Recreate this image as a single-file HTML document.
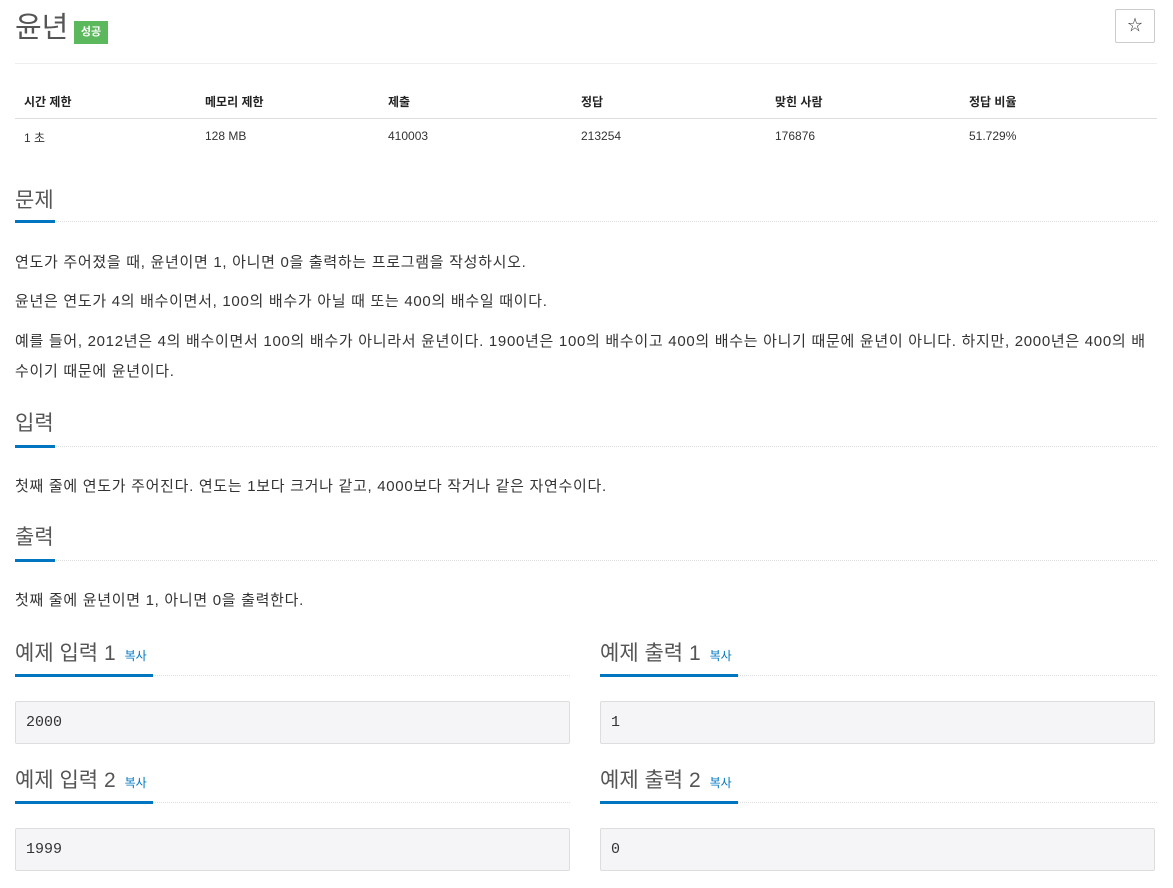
<!DOCTYPE html>
<html><head><meta charset="utf-8"><style>
*{box-sizing:border-box;margin:0;padding:0}
body{width:1173px;height:888px;background:#fff;font-family:"Liberation Sans","Noto Sans CJK KR",sans-serif;color:#333;position:relative;overflow:hidden}
.abs{position:absolute}
.title{left:15px;top:8px;font-size:29px;color:#555;line-height:40px}
.badge{left:74px;top:21px;width:34px;height:23px;background:#5cb85c;color:#fff;font-size:11px;font-weight:bold;text-align:center;line-height:23px}
.star{left:1115px;top:9px;width:40px;height:34px;border:1px solid #ccc;border-radius:2px;text-align:center;line-height:32px;font-size:15px;color:#333}
.hr{left:15px;width:1142px;height:1px;background:#eee}
.th{top:93px;font-size:12px;font-weight:bold;color:#222}
.td{top:129px;font-size:12px;color:#333}
.h{font-size:21px;color:#555;line-height:28px}
.ul{height:3px;background:#0076c0}
.dot{height:0;border-top:1px dotted #ddd}
.p{left:15px;font-size:15px;line-height:20px;color:#333;letter-spacing:0.7px;word-break:break-all}
.copy{font-size:12px;color:#0076c0;margin-left:9px}
.pre{height:43px;background:#f5f5f7;border:1px solid #ddd;border-radius:2px;font-family:"Liberation Mono",monospace;font-size:15px;line-height:41px;padding-left:10px;color:#333}
</style></head><body>
<div class="abs title">윤년</div>
<div class="abs badge">성공</div>
<div class="abs star">☆</div>
<div class="abs hr" style="top:63px"></div>
<div class="abs th" style="left:24px">시간 제한</div>
<div class="abs th" style="left:205px">메모리 제한</div>
<div class="abs th" style="left:388px">제출</div>
<div class="abs th" style="left:581px">정답</div>
<div class="abs th" style="left:775px">맞힌 사람</div>
<div class="abs th" style="left:969px">정답 비율</div>
<div class="abs hr" style="top:118px;background:#ddd"></div>
<div class="abs td" style="left:24px">1 초</div>
<div class="abs td" style="left:205px">128 MB</div>
<div class="abs td" style="left:388px">410003</div>
<div class="abs td" style="left:581px">213254</div>
<div class="abs td" style="left:775px">176876</div>
<div class="abs td" style="left:969px">51.729%</div>

<div class="abs h" style="left:15px;top:187px">문제</div>
<div class="abs dot" style="left:15px;top:221px;width:1142px"></div>
<div class="abs ul" style="left:15px;top:220px;width:40px"></div>
<div class="abs p" style="top:253px">연도가 주어졌을 때, 윤년이면 1, 아니면 0을 출력하는 프로그램을 작성하시오.</div>
<div class="abs p" style="top:292px">윤년은 연도가 4의 배수이면서, 100의 배수가 아닐 때 또는 400의 배수일 때이다.</div>
<div class="abs p" style="top:327px;width:1150px;line-height:30px">예를 들어, 2012년은 4의 배수이면서 100의 배수가 아니라서 윤년이다. 1900년은 100의 배수이고 400의 배수는 아니기 때문에 윤년이 아니다. 하지만, 2000년은 400의 배<br>수이기 때문에 윤년이다.</div>

<div class="abs h" style="left:15px;top:410px">입력</div>
<div class="abs dot" style="left:15px;top:446px;width:1142px"></div>
<div class="abs ul" style="left:15px;top:445px;width:40px"></div>
<div class="abs p" style="top:477px">첫째 줄에 연도가 주어진다. 연도는 1보다 크거나 같고, 4000보다 작거나 같은 자연수이다.</div>

<div class="abs h" style="left:15px;top:524px">출력</div>
<div class="abs dot" style="left:15px;top:560px;width:1142px"></div>
<div class="abs ul" style="left:15px;top:559px;width:40px"></div>
<div class="abs p" style="top:591px">첫째 줄에 윤년이면 1, 아니면 0을 출력한다.</div>

<div class="abs h" style="left:15px;top:640px">예제 입력 1<span class="copy">복사</span></div>
<div class="abs dot" style="left:15px;top:675px;width:555px"></div>
<div class="abs ul" style="left:15px;top:674px;width:138px"></div>
<div class="abs pre" style="left:15px;top:701px;width:555px">2000</div>
<div class="abs h" style="left:600px;top:640px">예제 출력 1<span class="copy">복사</span></div>
<div class="abs dot" style="left:600px;top:675px;width:557px"></div>
<div class="abs ul" style="left:600px;top:674px;width:138px"></div>
<div class="abs pre" style="left:600px;top:701px;width:555px">1</div>

<div class="abs h" style="left:15px;top:767px">예제 입력 2<span class="copy">복사</span></div>
<div class="abs dot" style="left:15px;top:802px;width:555px"></div>
<div class="abs ul" style="left:15px;top:801px;width:138px"></div>
<div class="abs pre" style="left:15px;top:828px;width:555px">1999</div>
<div class="abs h" style="left:600px;top:767px">예제 출력 2<span class="copy">복사</span></div>
<div class="abs dot" style="left:600px;top:802px;width:557px"></div>
<div class="abs ul" style="left:600px;top:801px;width:138px"></div>
<div class="abs pre" style="left:600px;top:828px;width:555px">0</div>
</body></html>
